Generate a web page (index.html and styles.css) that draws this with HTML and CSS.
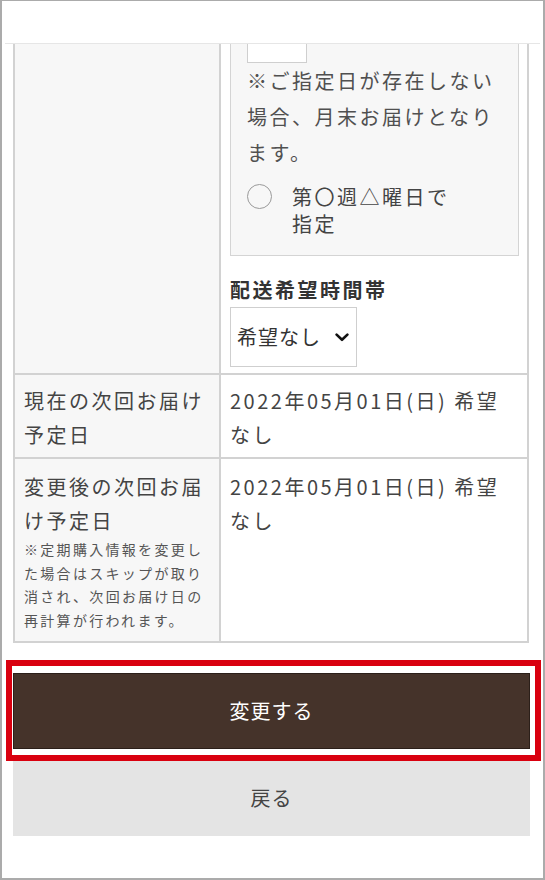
FILE: index.html
```html
<!DOCTYPE html>
<html lang="ja">
<head>
<meta charset="utf-8">
<title>定期購入情報の変更</title>
<link rel="stylesheet" href="styles.css">
</head>
<body>
<div class="frame">
  <header class="topbar"></header>
  <main class="viewport">
    <div class="content">
      <div class="info-table">
        <div class="cell head row-first"></div>
        <div class="cell value row-first">
          <div class="option-box">
            <div class="day-input"></div>
            <p class="box-note">※ご指定日が存在しない場合、月末お届けとなります。</p>
            <div class="radio-row">
              <span class="radio"></span>
              <span class="radio-label">第〇週△曜日で指定</span>
            </div>
          </div>
          <div class="field-label">配送希望時間帯</div>
          <div class="select">
            <span>希望なし</span>
            <svg class="chevron" width="14" height="9" viewBox="0 0 14 9"><path d="M1.6 1.6 L7 6.8 L12.4 1.6" fill="none" stroke="#111" stroke-width="2.6" stroke-linecap="round" stroke-linejoin="round"/></svg>
          </div>
        </div>

        <div class="cell head">現在の次回お届け予定日</div>
        <div class="cell value">2022年05月01日(日) 希望なし</div>

        <div class="cell head row-last">変更後の次回お届け予定日
          <p class="small-note">※定期購入情報を変更した場合はスキップが取り消され、次回お届け日の再計算が行われます。</p>
        </div>
        <div class="cell value row-last">2022年05月01日(日) 希望なし</div>
      </div>

      <div class="actions">
        <button class="btn btn-primary" type="button">変更する</button>
        <button class="btn btn-back" type="button">戻る</button>
      </div>
    </div>
    <div class="highlight"></div>
  </main>
</div>
</body>
</html>
```

FILE: styles.css
```css
* { box-sizing: border-box; }
html, body { margin: 0; padding: 0; background: #fff; }
body {
  font-family: "Noto Sans CJK JP", "Noto Sans", sans-serif;
  color: #444;
}
.frame {
  width: 545px;
  height: 880px;
  border: 2px solid #ababab;
  border-top-width: 1px;
  display: flex;
  flex-direction: column;
  overflow: hidden;
  position: relative;
}
.topbar {
  height: 43px;
  flex: none;
  margin: 0 3px;
  border-bottom: 1px solid #e6e6e6;
}
.viewport {
  flex: 1;
  overflow: hidden;
  position: relative;
}
.content {
  margin-top: -49px;
  padding-left: 11px;
}
.info-table {
  width: 516px;
  display: grid;
  grid-template-columns: 206px 308px;
  border-top: 2px solid #d2d2d2;
  border-left: 2px solid #d2d2d2;
}
.cell {
  border-right: 2px solid #d2d2d2;
  border-bottom: 2px solid #d2d2d2;
  font-size: 20px;
  line-height: 34px;
  letter-spacing: 2.5px;
  padding: 9px 8px 5px 9px;
}
.cell.row-first { padding-top: 7px; padding-bottom: 6px; }
.cell.row-last { padding-top: 11px; padding-bottom: 8px; }
.head { background: #f7f7f7; }
.value { background: #fff; }
.option-box {
  background: #f7f7f7;
  border: 1px solid #d4d4d4;
  padding: 16px 16px 18px 16px;
  margin-top: 2px;
}
.day-input {
  width: 60px;
  height: 40px;
  background: #fff;
  border: 1px solid #cfcfcf;
}
.box-note {
  margin: 0;
  font-size: 20px;
  line-height: 36px;
  color: #505050;
}
.radio-row {
  display: flex;
  align-items: flex-start;
  margin-top: 12px;
}
.radio {
  flex: none;
  width: 25px;
  height: 25px;
  border: 1.5px solid #9a9a9a;
  border-radius: 50%;
  margin-top: 1px;
  margin-right: 20px;
}
.radio-label {
  width: 175px;
  font-size: 20px;
  line-height: 27px;
  letter-spacing: 2.5px;
}
.field-label {
  margin-top: 19px;
  font-weight: bold;
  font-size: 20px;
  line-height: 30px;
  color: #333;
}
.select {
  margin-top: 2px;
  width: 127px;
  height: 60px;
  border: 1px solid #cfcfcf;
  background: #fff;
  display: flex;
  align-items: center;
  padding-left: 6px;
  letter-spacing: 1px;
  color: #333;
}
.chevron { margin-left: 14px; }
.small-note {
  margin: 0;
  font-size: 14px;
  line-height: 23.7px;
  letter-spacing: 2.3px;
  color: #555;
}
.actions {
  width: 517px;
  margin-top: 30px;
  display: flex;
  flex-direction: column;
  gap: 11px;
}
.btn {
  display: block;
  width: 100%;
  height: 76px;
  border: 0;
  font-family: inherit;
  font-size: 20px;
  letter-spacing: 1px;
  padding: 0;
}
.btn-primary {
  background: #45332a;
  border: 1px solid #2b1f19;
  color: #fff;
}
.btn-back {
  background: #e4e4e4;
  color: #444;
}
.highlight {
  position: absolute;
  left: 4px;
  top: 616px;
  width: 535px;
  height: 101px;
  border: 6px solid #d9000f;
  pointer-events: none;
}
```
